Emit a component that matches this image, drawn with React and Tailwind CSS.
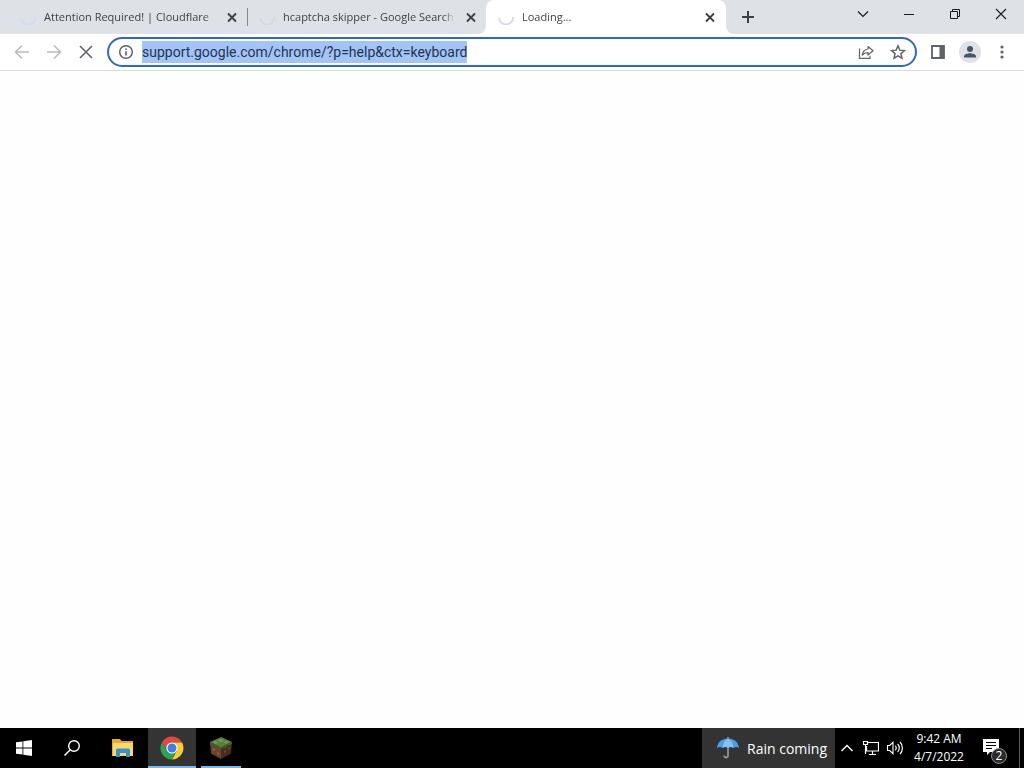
import { useState } from 'react'

const TABS = [
  { id: 1, title: 'Attention Required! | Cloudflare', spinner: '#d2dcf0', separator: true },
  { id: 2, title: 'hcaptcha skipper - Google Search', spinner: '#cfd9e6' },
  { id: 3, title: 'Loading...', spinner: '#d8dce8', active: true },
]

function Icon({ size = 16, children, className = '' }) {
  return (
    <svg width={size} height={size} viewBox={`0 0 ${size} ${size}`} fill="none" stroke="currentColor" className={className} aria-hidden="true">
      {children}
    </svg>
  )
}

function Tab({ tab }) {
  return (
    <div className={`relative flex items-center w-60 -mr-px h-full pl-3 pr-2 gap-2 ${tab.active ? 'bg-white rounded-t-lg' : ''}`}>
      {tab.active && (
        <>
          <svg width="8" height="8" className="absolute bottom-0 -left-2 fill-white" aria-hidden="true"><path d="M8 0v8H0a8 8 0 0 0 8-8z" /></svg>
          <svg width="8" height="8" className="absolute bottom-0 -right-2 fill-white" aria-hidden="true"><path d="M0 0v8h8a8 8 0 0 1-8-8z" /></svg>
        </>
      )}
      <Icon className="shrink-0">
        <path d="M1 9a7 7 0 0 0 14-1" stroke={tab.spinner} strokeWidth="2" />
      </Icon>
      <a href="#tab" className="flex-1 min-w-0 overflow-hidden whitespace-nowrap text-[11px] leading-4 text-[#3f4347] [mask-image:linear-gradient(to_left,transparent,black_12px)]">
        {tab.title}
      </a>
      <button className="shrink-0 w-4 h-4 text-[#3c4043]" aria-label="Close tab">
        <Icon><path d="M4 4.500l8 8M12 4.500l-8 8" strokeWidth="1.800" /></Icon>
      </button>
      {tab.separator && <span className="absolute right-0 top-2 h-[18px] w-px bg-[#85898f]" />}
    </div>
  )
}

function ToolButton({ label, className = 'text-[#5f6368]', children }) {
  return (
    <button className={`shrink-0 w-8 h-full flex items-center justify-center ${className}`} aria-label={label}>
      {children}
    </button>
  )
}

function WindowButton({ label, children }) {
  return (
    <button className="w-[46px] h-7 flex items-center justify-center text-[#1b1b1b]" aria-label={label}>
      {children}
    </button>
  )
}

function TabStrip() {
  return (
    <header className="flex h-[34px] bg-[#dee1e6] pl-2">
      <nav className="flex h-full">
        {TABS.map((t) => <Tab key={t.id} tab={t} />)}
      </nav>
      <button className="w-7 ml-[9px] h-full flex items-center justify-center text-[#3c4043]" aria-label="New tab">
        <Icon><path d="M8 2v12M2 8h12" strokeWidth="2" /></Icon>
      </button>
      <div className="flex ml-auto">
        <WindowButton label="Search tabs"><Icon size={12}><path d="M1 3.500l5 5 5-5" strokeWidth="1.200" /></Icon></WindowButton>
        <WindowButton label="Minimize"><Icon size={10}><path d="M0 5.500h10" /></Icon></WindowButton>
        <WindowButton label="Restore"><Icon size={10}><path d="M.5 2.500h7v7h-7zM2.500 2.500v-2h7v7h-2" /></Icon></WindowButton>
        <WindowButton label="Close"><Icon size={12}><path d="M1 1l10 10M11 1L1 11" strokeWidth="1.100" /></Icon></WindowButton>
      </div>
    </header>
  )
}

function Toolbar() {
  const [url, setUrl] = useState('support.google.com/chrome/?p=help&ctx=keyboard')

  return (
    <div className="flex items-center h-[37px] px-1.5 bg-white border-b border-[#d8dadd]">
      <ToolButton label="Back" className="text-[#b9bbbe]"><Icon><path d="M15 8H2M8 1.500L1.500 8 8 14.500" strokeWidth="1.600" /></Icon></ToolButton>
      <ToolButton label="Forward" className="text-[#b9bbbe]"><Icon><path d="M1 8h13M8 1.500L14.500 8 8 14.500" strokeWidth="1.600" /></Icon></ToolButton>
      <ToolButton label="Stop"><Icon><path d="M2 2l12 12M14 2L2 14" strokeWidth="1.600" /></Icon></ToolButton>

      <div className="flex flex-1 min-w-0 items-center h-[30px] mx-[5px] px-px rounded-full border-2 border-[#2f6bbd] bg-white">
        <ToolButton label="View site information">
          <Icon>
            <circle cx="8" cy="8" r="6.300" strokeWidth="1.500" />
            <path d="M8 7.200v4.300M8 4.400v1.600" strokeWidth="1.600" />
          </Icon>
        </ToolButton>
        <input
          aria-label="Address and search bar"
          value={url}
          onChange={(e) => setUrl(e.target.value)}
          spellCheck={false}
          className="field-sizing-content min-w-0 h-[22px] bg-[#a4c3f6] font-['Roboto',sans-serif] text-[14px] leading-[22px] text-[#1f3550] outline-none"
        />
        <div className="flex h-full ml-auto">
          <ToolButton label="Share this page">
            <Icon>
              <path d="M1.500 4.500v9.800h10.500v-2.500" strokeWidth="1.200" />
              <path d="M10 2.500l5 4.300-5 4.200V8.700c-2.600 0-4.300.8-5.700 2.500.4-3.300 2.300-5.800 5.700-6.200z" strokeWidth="1.200" strokeLinejoin="round" />
            </Icon>
          </ToolButton>
          <ToolButton label="Bookmark this tab">
            <Icon><path d="M8 1.800l1.800 4.300 4.700.4-3.600 3.100 1.100 4.600L8 11.800l-4 2.400 1.100-4.600-3.600-3.100 4.700-.4z" strokeWidth="1.400" /></Icon>
          </ToolButton>
        </div>
      </div>

      <ToolButton label="Side panel">
        <Icon><path d="M2 2h12v12H2z" strokeWidth="1.800" /><path d="M9.500 2H14v12H9.500z" fill="currentColor" stroke="none" /></Icon>
      </ToolButton>
      <ToolButton label="Profile">
        <Icon size={22} className="rounded-full bg-[#dee1e6] text-[#4a5563]">
          <circle cx="11" cy="8" r="3" fill="currentColor" stroke="none" />
          <path d="M5 16.500v-1.300c0-2.100 3.500-3 6-3s6 .9 6 3v1.300z" fill="currentColor" stroke="none" />
        </Icon>
      </ToolButton>
      <ToolButton label="Customize and control">
        <Icon><g fill="currentColor" stroke="none"><circle cx="8" cy="3" r="1.600" /><circle cx="8" cy="8" r="1.600" /><circle cx="8" cy="13" r="1.600" /></g></Icon>
      </ToolButton>
    </div>
  )
}

function ChromeLogo() {
  return (
    <svg width="24" height="24" viewBox="0 0 24 24" aria-hidden="true">
      <path d="M12 6.500h9.960A11.500 11.500 0 0 0 2.040 6.250L7.240 14.750z" fill="#dd4b3e" />
      <path d="M16.760 14.750L12 23.500A11.500 11.500 0 0 0 22.100 6.500H12z" fill="#fbcb35" />
      <path d="M7.240 14.750L2.040 6.250A11.500 11.500 0 0 0 12 23.500l4.760-8.750z" fill="#2fa252" />
      <circle cx="12" cy="12" r="5.600" fill="#fff" />
      <circle cx="12" cy="12" r="4.500" fill="#3f80e8" />
    </svg>
  )
}

function FolderIcon() {
  return (
    <svg width="22" height="18" viewBox="0 0 22 18" aria-hidden="true">
      <path d="M0 0h8l1.500 2H21v15H0z" fill="#e3a93a" />
      <path d="M1 4h20v13H1z" fill="#fbd669" />
      <path d="M4 18v-7a1.500 1.500 0 0 1 1.500-1.500h11a1.500 1.500 0 0 1 1.500 1.500v7h-4v-4H8v4z" fill="#3b8fcc" />
    </svg>
  )
}

function BlockIcon() {
  return (
    <svg width="24" height="24" viewBox="0 0 24 24" aria-hidden="true">
      <path d="M1 6l11 5v12L2 17.500z" fill="#6b432e" />
      <path d="M23 6l-11 5v12l10-5.500z" fill="#4b2d20" />
      <path d="M12 1l11 5-11 5.500L1 6z" fill="#587f40" />
      <path d="M1 6l11 5.500V13l-2-1v-1l-2 1-2-1.500-2 .5L1 8zM23 6l-11 5.500V13l3-1.500 2 .5 2-3 2 .5 2-2z" fill="#3f5f2b" />
      <path d="M12 3l3 1.500L12 6 9 4.500zM6 5l3 1.500L7 8 4 6.500zM17 5l3 1-3 1.500-2-1z" fill="#74a054" />
      <path d="M4 12l2 1v2l-2-1zM8 16l2 1v2l-2-1z" fill="#8d6044" />
      <path d="M15 15l2-1v2l-2 1zM19 12l2-1v2l-2 1z" fill="#70442f" />
    </svg>
  )
}

function UmbrellaIcon() {
  return (
    <svg width="22" height="22" viewBox="0 0 22 22" fill="none" aria-hidden="true">
      <path d="M11 9v9.500a2 2 0 0 1-4 0" stroke="#8d9399" strokeWidth="1.800" />
      <path d="M11 0v2" stroke="#9aa0a6" strokeWidth="1.500" />
      <path d="M0 11C.5 5 5 1.500 11 1.500S21.500 5 22 11c-1.500-1.500-4-1.500-5.500 0-1.500-1.500-4-1.500-5.500 0-1.500-1.500-4-1.500-5.500 0C4 9.500 1.500 9.500 0 11z" fill="#4b9fe2" />
      <path d="M5.500 11C6 6 8 3 11 1.500 14 3 16 6 16.500 11c-1.500-1.500-4-1.500-5.500 0-1.500-1.500-4-1.500-5.500 0z" fill="#83c3f1" />
    </svg>
  )
}

function TaskButton({ label, open, active, children }) {
  return (
    <button className={`relative w-12 h-full flex items-center justify-center ${active ? 'bg-[#343434]' : ''}`} aria-label={label}>
      {children}
      {open && <span className={`absolute bottom-0 h-0.5 bg-[#76b9ed] ${active ? 'inset-x-0' : 'inset-x-1'}`} />}
    </button>
  )
}

function Taskbar() {
  return (
    <footer className="flex h-10 bg-black text-white">
      <TaskButton label="Start">
        <svg width="16" height="16" viewBox="0 0 16 16" fill="#fff" aria-hidden="true">
          <path d="M0 2.300L6.500 1.400v6.200H0zM7.300 1.300L16 0v7.600H7.300zM0 8.400h6.500v6.200L0 13.700zM7.300 8.400H16V16l-8.700-1.300z" />
        </svg>
      </TaskButton>
      <TaskButton label="Search">
        <Icon size={16}><circle cx="10" cy="6" r="5.300" strokeWidth="1.400" /><path d="M6.200 9.800L.5 15.500" strokeWidth="1.500" /></Icon>
      </TaskButton>
      <div className="flex h-full gap-px ml-[3px]">
        <TaskButton label="File Explorer"><FolderIcon /></TaskButton>
        <TaskButton label="Google Chrome" open active><ChromeLogo /></TaskButton>
        <TaskButton label="Minecraft" open><BlockIcon /></TaskButton>
      </div>

      <div className="flex h-full ml-auto items-center">
        <button className="flex items-center gap-2 h-full w-[133px] pl-[15px] bg-[#333333] text-[14px] leading-5 whitespace-nowrap">
          <UmbrellaIcon />
          <span className="pt-0.5">Rain coming</span>
        </button>
        <button className="w-6 h-full flex items-center justify-center" aria-label="Show hidden icons">
          <Icon size={12}><path d="M.5 9L6 3.500 11.500 9" strokeWidth="1.400" /></Icon>
        </button>
        <button className="w-6 h-full flex items-center justify-center" aria-label="Network">
          <Icon><path d="M5 2.500h10.500v8.500H3.500V6M.5 1.500h4v3h-4zM2.500 4.500v9.500M9.500 11v3M6 14.500h7" strokeWidth="1.200" /></Icon>
        </button>
        <button className="w-6 h-full flex items-center justify-center" aria-label="Volume">
          <Icon size={18}>
            <path d="M1.500 6.500h2.200L7 3.300v11.400l-3.300-3.200H1.500z" strokeWidth="1.100" />
            <path d="M9.300 6.700c1.200 1.200 1.200 3.400 0 4.600M11.600 4.900c2.200 2.200 2.200 6 0 8.200M14 3c3.200 3.200 3.200 8.800 0 12" strokeWidth="1.200" />
          </Icon>
        </button>
        <button className="w-16 h-full flex flex-col items-center justify-center text-[12px] leading-[18px] whitespace-nowrap">
          <time>9:42 AM</time>
          <time>4/7/2022</time>
        </button>
        <button className="relative w-12 h-full flex items-center justify-center" aria-label="Notifications">
          <Icon size={24}>
            <path d="M0 3h16v13H7l-3 3v-3H0z" fill="#fff" stroke="none" />
            <path d="M3 6.500h10M3 9.500h10M3 12.500h6" stroke="#000" />
          </Icon>
          <span className="absolute right-3 bottom-1 w-4 h-4 rounded-full border border-[#8a8a8a] bg-[#2b2b2b] text-[12px] leading-[14px] text-center">2</span>
        </button>
        <button className="w-[5px] h-full border-l border-[#5a5a5a]" aria-label="Show desktop" />
      </div>
    </footer>
  )
}

export default function App() {
  return (
    <div className="flex flex-col min-h-screen bg-white font-['Open_Sans','Noto_Sans',sans-serif]">
      <TabStrip />
      <Toolbar />
      <main className="flex-1 bg-[#fefefe]" />
      <Taskbar />
    </div>
  )
}
